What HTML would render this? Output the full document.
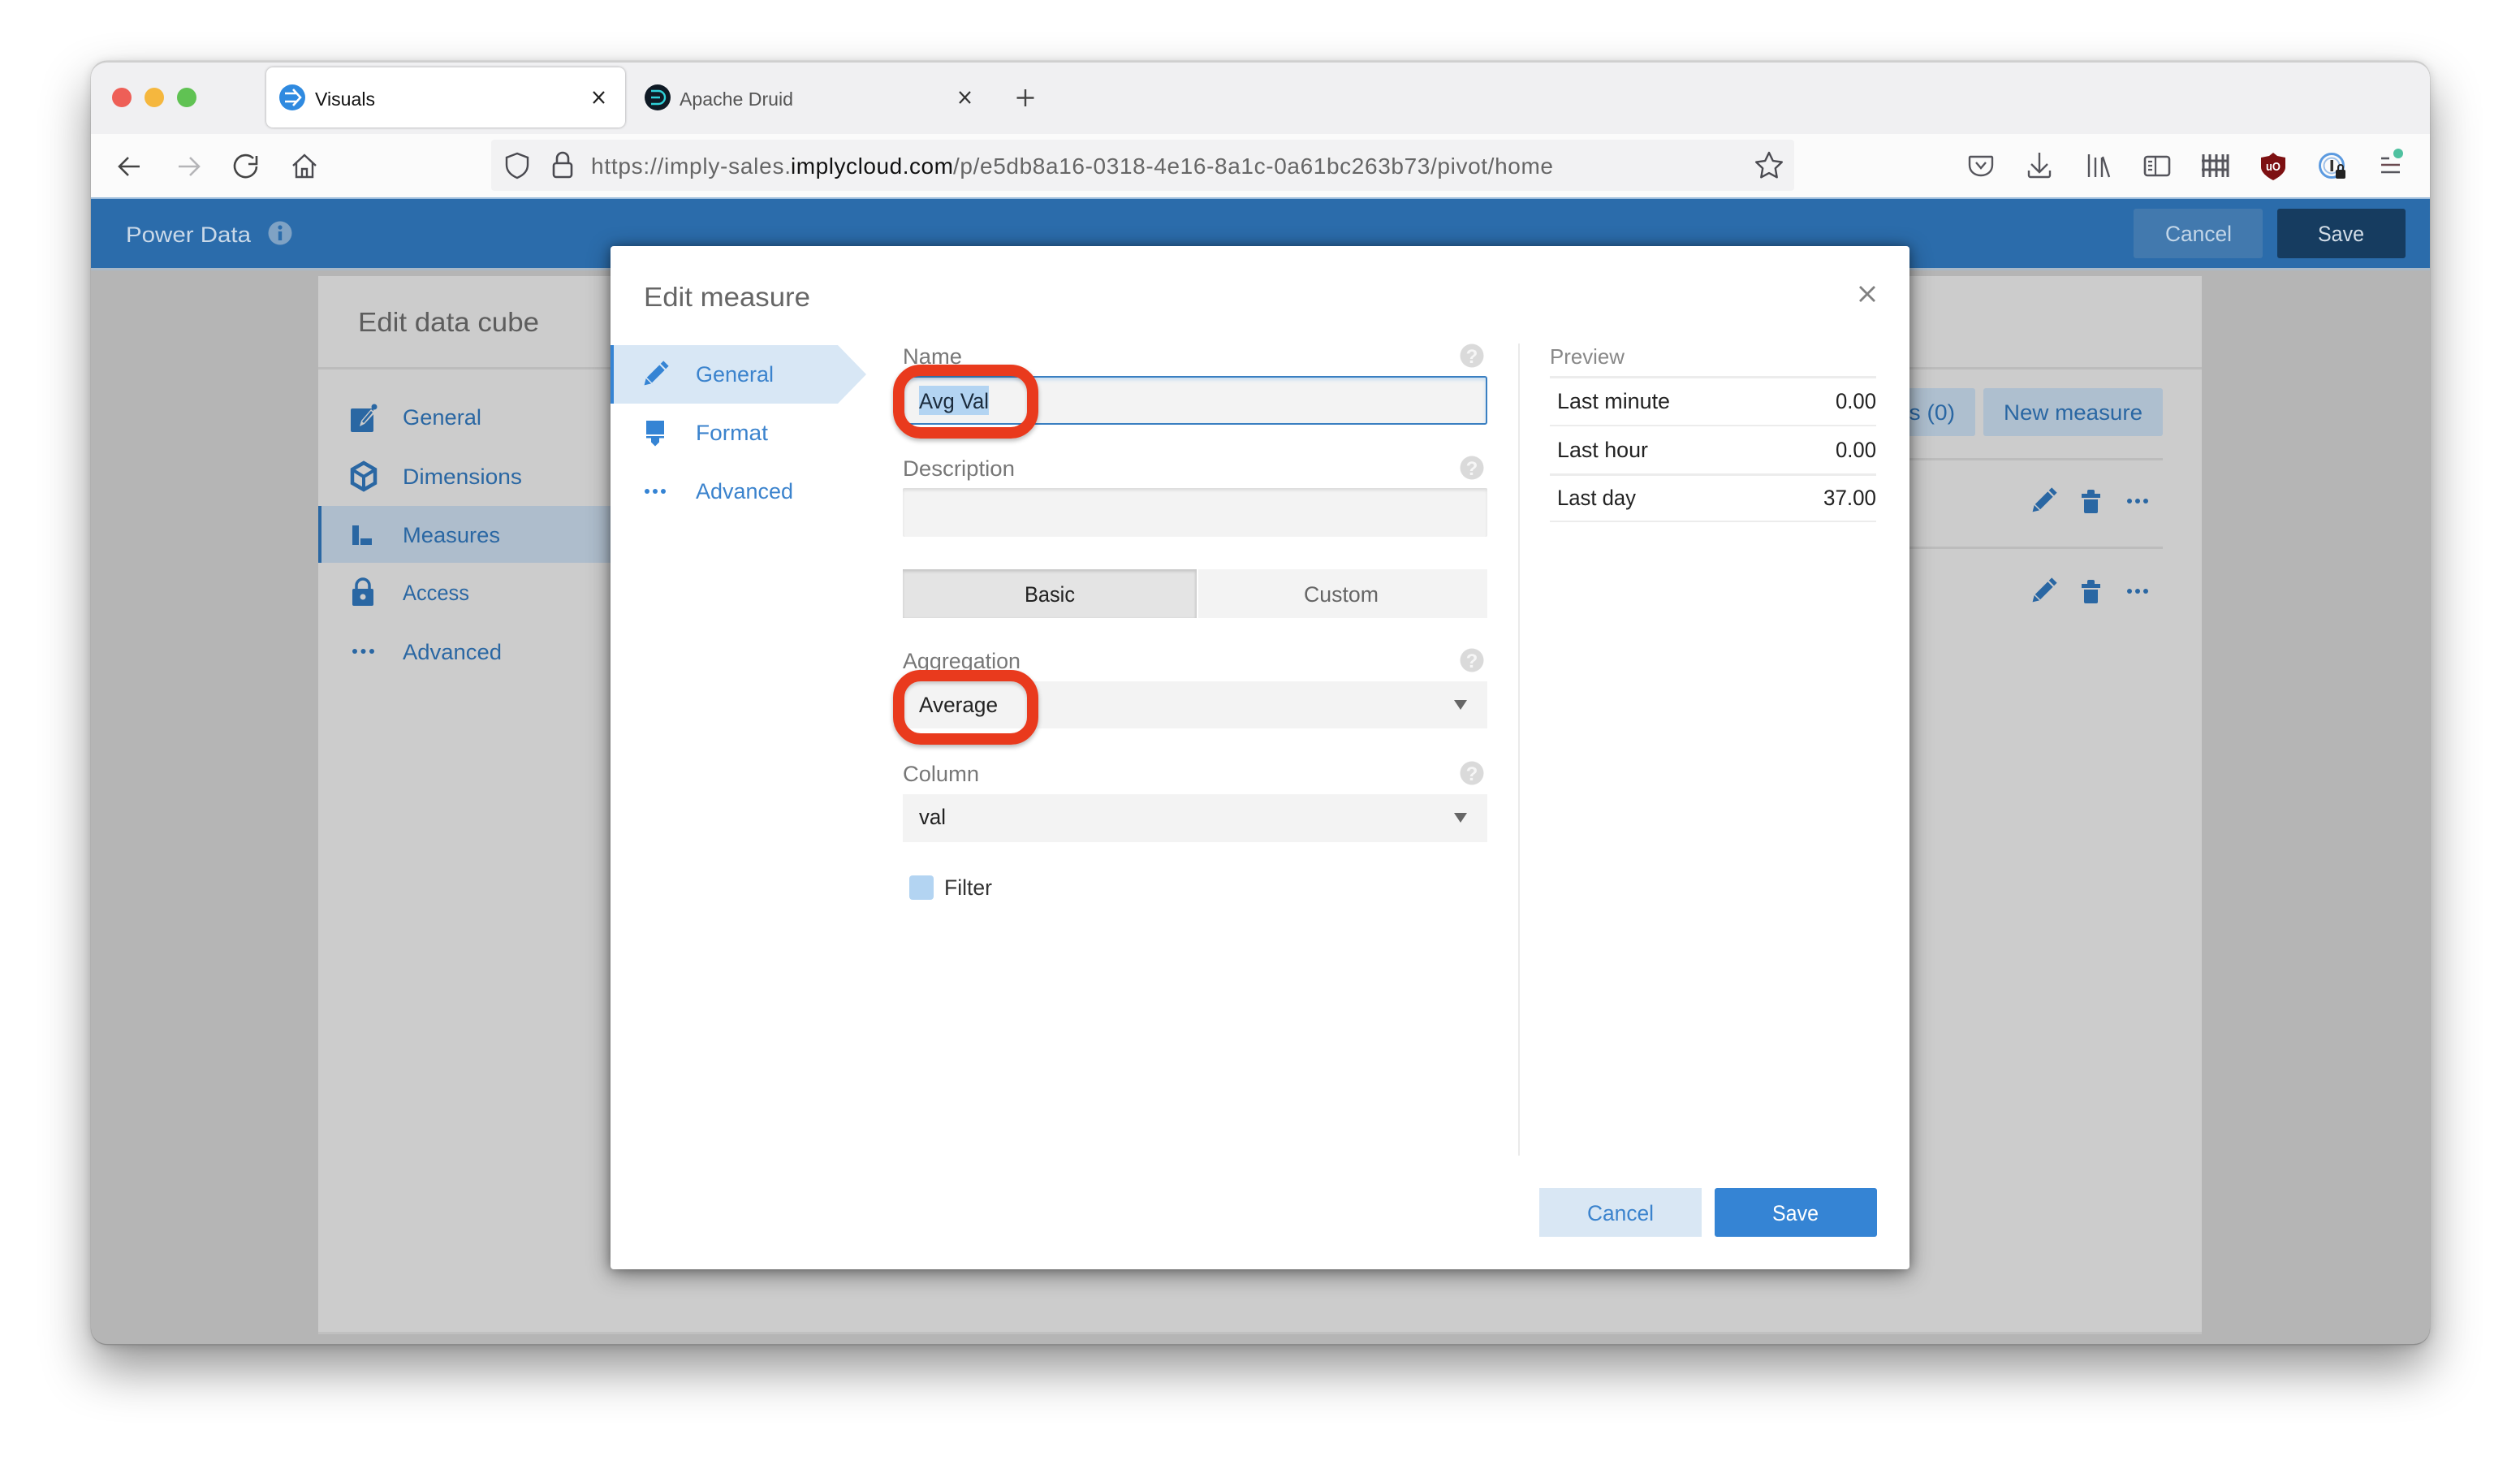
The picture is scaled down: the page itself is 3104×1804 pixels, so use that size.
<!DOCTYPE html>
<html lang="en">
<head>
<meta charset="utf-8">
<title>Edit measure</title>
<style>
html,body{margin:0;padding:0;background:#fff;width:3104px;height:1804px;overflow:hidden;font-family:"Liberation Sans",sans-serif}
div{position:absolute;box-sizing:border-box}
svg.l{position:absolute;left:0;top:0;width:3104px;height:1804px}
svg text{font-family:"Liberation Sans",sans-serif}
.red{border:14px solid #e93a1d;border-radius:34px;box-shadow:0 3px 6px rgba(0,0,0,.28),inset 0 3px 4px rgba(0,0,0,.18)}
</style>
</head>
<body>
<!-- window -->
<div style="left:112px;top:75px;width:2881px;height:1581px;background:#b5b5b5;border-radius:20px;box-shadow:0 30px 60px rgba(0,0,0,.42),0 2px 12px rgba(0,0,0,.15),0 0 1px rgba(0,0,0,.4);border-bottom:1px solid #8c8c8c"></div>
<div style="left:112px;top:75px;width:2881px;height:90px;background:#f0f0f2;border-radius:20px 20px 0 0;border-top:2px solid #cfcfcf"></div>
<div style="left:112px;top:165px;width:2881px;height:78px;background:#fbfbfb"></div>
<!-- tab -->
<div style="left:328px;top:83px;width:442px;height:74px;background:#fff;border-radius:8px;box-shadow:0 0 3px rgba(0,0,0,.35)"></div>
<!-- url bar -->
<div style="left:605px;top:172px;width:1605px;height:63px;background:#f2f2f3;border-radius:4px"></div>
<!-- app header -->
<div style="left:112px;top:243px;width:2881px;height:2px;background:#9cbcdc"></div>
<div style="left:112px;top:245px;width:2881px;height:85px;background:#2b6cab"></div>
<div style="left:112px;top:330px;width:2881px;height:3px;background:#a9b9c8"></div>
<div style="left:2628px;top:257px;width:159px;height:61px;background:#4279ae;border-radius:3px"></div>
<div style="left:2805px;top:257px;width:158px;height:61px;background:#163c60;border-radius:3px"></div>
<!-- panel -->
<div style="left:392px;top:340px;width:2320px;height:1303px;background:#ccc;border-bottom:3px solid #c0c0c0"></div>
<div style="left:392px;top:452px;width:2320px;height:3px;background:#bcbcbc"></div>
<div style="left:392px;top:623px;width:360px;height:70px;background:#aebdcc"></div>
<div style="left:392px;top:623px;width:4px;height:70px;background:#2a67a3"></div>
<div style="left:2200px;top:478px;width:233px;height:59px;background:#aebfcf;border-radius:3px"></div>
<div style="left:2443px;top:478px;width:221px;height:59px;background:#aebfcf;border-radius:3px"></div>
<div style="left:2200px;top:564px;width:464px;height:3px;background:#bcbcbc"></div>
<div style="left:2200px;top:673px;width:464px;height:3px;background:#bcbcbc"></div>

<svg class="l" viewBox="0 0 3104 1804" xmlns="http://www.w3.org/2000/svg">
  <!-- traffic lights -->
  <circle cx="150" cy="120" r="12" fill="#ee5f57"/>
  <circle cx="190" cy="120" r="12" fill="#f5b73e"/>
  <circle cx="230" cy="120" r="12" fill="#60c253"/>
  <!-- favicons -->
  <circle cx="360" cy="120" r="16" fill="#2f8ae0"/>
  <path d="M351 115h14M351 125h14M361 110l9 10-9 10" fill="none" stroke="#fff" stroke-width="2.6"/>
  <text x="388" y="130" font-size="23" fill="#111" textLength="74" lengthAdjust="spacingAndGlyphs">Visuals</text>
  <path d="M731 113l13 14M744 113l-13 14" stroke="#222" stroke-width="2.2"/>
  <circle cx="810" cy="120" r="16" fill="#0f1a25"/>
  <path d="M802 112h9a8 8 0 0 1 0 16h-9M802 120h11" fill="none" stroke="#2fd0d8" stroke-width="2.4"/>
  <text x="837" y="130" font-size="23" fill="#555" textLength="140" lengthAdjust="spacingAndGlyphs">Apache Druid</text>
  <path d="M1182 113l13 14M1195 113l-13 14" stroke="#333" stroke-width="2.2"/>
  <path d="M1263 110v21M1252.500 120.500h21" stroke="#444" stroke-width="2.4"/>
  <!-- nav buttons -->
  <path d="M172 205h-24M158 194l-11 11 11 11" fill="none" stroke="#444" stroke-width="2.6"/>
  <path d="M220 205h24M234 194l11 11-11 11" fill="none" stroke="#b5b5b8" stroke-width="2.6"/>
  <path d="M312 195a13.500 13.500 0 1 0 4 10M316 192v10h-10" fill="none" stroke="#444" stroke-width="2.6"/>
  <path d="M361 204l14-13 14 13M365 201v17h20v-17M372 218v-10h6v10" fill="none" stroke="#4a4a50" stroke-width="2.4"/>
  <!-- url bar icons -->
  <path d="M637 189l13 5v9c0 8-6 13-13 16-7-3-13-8-13-16v-9z" fill="none" stroke="#4a4a50" stroke-width="2.4"/>
  <rect x="682" y="201" width="22" height="17" rx="3" fill="none" stroke="#4a4a50" stroke-width="2.6"/>
  <path d="M686 201v-6a7 7 0 0 1 14 0v6" fill="none" stroke="#4a4a50" stroke-width="2.6"/>
  <text x="728" y="214" font-size="28" fill="#666" textLength="246" lengthAdjust="spacing">https://imply-sales.</text>
  <text x="974" y="214" font-size="28" fill="#111" textLength="200" lengthAdjust="spacing">implycloud.com</text>
  <text x="1174" y="214" font-size="28" fill="#666" textLength="739" lengthAdjust="spacing">/p/e5db8a16-0318-4e16-8a1c-0a61bc263b73/pivot/home</text>
  <path d="M2179 188l4.800 10 11 1.600-8 7.700 1.900 11-9.700-5.200-9.700 5.200 1.900-11-8-7.700 11-1.600z" fill="none" stroke="#4a4a50" stroke-width="2.4" stroke-linejoin="round"/>
  <!-- toolbar right icons -->
  <path d="M2427 193h26a1 1 0 0 1 1 1v9c0 8-6 13-14 13s-14-5-14-13v-9a1 1 0 0 1 1-1z" fill="none" stroke="#55555c" stroke-width="2.4"/>
  <path d="M2434 200l6 7 6-7" fill="none" stroke="#55555c" stroke-width="2.4"/>
  <path d="M2512 188v24M2502 202l10 10 10-10M2499 210v6a2 2 0 0 0 2 2h22a2 2 0 0 0 2-2v-6" fill="none" stroke="#55555c" stroke-width="2.4"/>
  <path d="M2573 190v28M2581 194v24M2589 194v24M2590 193l8 25" fill="none" stroke="#55555c" stroke-width="2.4"/>
  <rect x="2642" y="193" width="30" height="23" rx="3" fill="none" stroke="#55555c" stroke-width="2.6"/>
  <path d="M2655 193v23M2646 199h5M2646 204h5M2646 209h5" fill="none" stroke="#55555c" stroke-width="2.2"/>
  <path d="M2714 190v28M2722 190v28M2730 190v28M2738 190v28M2744 190v28M2712 198h33M2712 209h33" fill="none" stroke="#55555c" stroke-width="3"/>
  <path d="M2800 188l5 4 10 2v12c0 6-7 12-15 16-8-4-15-10-15-16v-12l10-2z" fill="#7d1012"/>
  <text x="2791" y="210" font-size="15" font-weight="bold" fill="#fff" textLength="18" lengthAdjust="spacingAndGlyphs">uO</text>
  <circle cx="2872" cy="204" r="14.500" fill="none" stroke="#5b9ae0" stroke-width="3"/>
  <circle cx="2872" cy="204" r="9.500" fill="none" stroke="#9ec0e8" stroke-width="2"/>
  <rect x="2870.500" y="197" width="3.500" height="14" fill="#333"/>
  <rect x="2877" y="209" width="12" height="11" rx="2" fill="#222"/>
  <path d="M2880 209v-3a3 3 0 0 1 6 0v3" fill="none" stroke="#222" stroke-width="2"/>
  <path d="M2933 195h10" stroke="#55555c" stroke-width="2.600"/>
  <path d="M2933 203h23" stroke="#6b4a50" stroke-width="2.600"/>
  <path d="M2933 212h23" stroke="#55555c" stroke-width="2.600"/>
  <circle cx="2954" cy="189" r="6" fill="#4fc1a0"/>

  <!-- header text -->
  <text x="155" y="298" font-size="27" fill="#cad9e8" textLength="154" lengthAdjust="spacingAndGlyphs">Power Data</text>
  <circle cx="345" cy="287" r="14.500" fill="#7fa2c4"/>
  <circle cx="345" cy="280" r="2.600" fill="#2b6cab"/>
  <rect x="342.800" y="285" width="4.400" height="11" fill="#2b6cab"/>
  <text x="2667" y="297" font-size="27" fill="#c3d6e8" textLength="82" lengthAdjust="spacingAndGlyphs">Cancel</text>
  <text x="2855" y="297" font-size="27" fill="#d4dee8" textLength="57" lengthAdjust="spacingAndGlyphs">Save</text>

  <!-- panel left -->
  <text x="441" y="408" font-size="33" fill="#5d5d5d" textLength="223" lengthAdjust="spacingAndGlyphs">Edit data cube</text>
  <g fill="#2a67a3" font-size="27">
    <text x="496" y="523" textLength="97" lengthAdjust="spacingAndGlyphs">General</text>
    <text x="496" y="596" textLength="147" lengthAdjust="spacingAndGlyphs">Dimensions</text>
    <text x="496" y="668" textLength="120" lengthAdjust="spacingAndGlyphs">Measures</text>
    <text x="496" y="739" textLength="82" lengthAdjust="spacingAndGlyphs">Access</text>
    <text x="496" y="812" textLength="122" lengthAdjust="spacingAndGlyphs">Advanced</text>
  </g>
  <!-- left icons -->
  <rect x="432" y="503" width="28" height="29" rx="2" fill="#2a67a3"/>
  <path d="M443 525l2-7 12-14 5 4-13 14z" fill="#ccc"/>
  <path d="M446 519l11-13 2 2-11 13z" fill="#2a67a3"/>
  <circle cx="461" cy="501" r="3.500" fill="#2a67a3"/>
  <path d="M448 570l14 8v17l-14 8-14-8v-17z" fill="none" stroke="#2a67a3" stroke-width="4.500"/>
  <path d="M435 579l13 8 13-8M448 587v15" fill="none" stroke="#2a67a3" stroke-width="4"/>
  <rect x="434" y="647" width="8" height="24" fill="#2a67a3"/>
  <rect x="444" y="663" width="14" height="8" fill="#2a67a3"/>
  <rect x="434" y="725" width="26" height="21" rx="2" fill="#2a67a3"/>
  <path d="M439 725v-4a8 8 0 0 1 16 0v4" fill="none" stroke="#2a67a3" stroke-width="3.500"/>
  <circle cx="447" cy="735" r="3.500" fill="#ccc"/>
  <g fill="#2a67a3"><circle cx="437" cy="802" r="3"/><circle cx="447.500" cy="802" r="3"/><circle cx="458" cy="802" r="3"/></g>

  <!-- panel right behind modal -->
  <text x="2210" y="517" font-size="27" fill="#2a67a3" textLength="198" lengthAdjust="spacingAndGlyphs">Suggestions (0)</text>
  <text x="2468" y="517" font-size="27" fill="#2a67a3" textLength="171" lengthAdjust="spacingAndGlyphs">New measure</text>
  <g id="rowicons" fill="#2a67a3">
    <g transform="translate(2517 617) rotate(45)"><rect x="-4.500" y="-19" width="9" height="5"/><rect x="-4.500" y="-12" width="9" height="22"/><path d="M-4.500 11.500h9L0 19z"/></g>
    <path d="M2571 608v-3a2 2 0 0 1 2-2h5a2 2 0 0 1 2 2v3h7v5h-23v-5z"/>
    <path d="M2567 615h17v15a2 2 0 0 1-2 2h-13a2 2 0 0 1-2-2z"/>
    <circle cx="2623" cy="617" r="3"/><circle cx="2633" cy="617" r="3"/><circle cx="2643" cy="617" r="3"/>
    <g transform="translate(2517 728) rotate(45)"><rect x="-4.500" y="-19" width="9" height="5"/><rect x="-4.500" y="-12" width="9" height="22"/><path d="M-4.500 11.500h9L0 19z"/></g>
    <path d="M2571 719v-3a2 2 0 0 1 2-2h5a2 2 0 0 1 2 2v3h7v5h-23v-5z"/>
    <path d="M2567 726h17v15a2 2 0 0 1-2 2h-13a2 2 0 0 1-2-2z"/>
    <circle cx="2623" cy="728" r="3"/><circle cx="2633" cy="728" r="3"/><circle cx="2643" cy="728" r="3"/>
  </g>
</svg>

<!-- modal -->
<div style="left:752px;top:303px;width:1600px;height:1260px;background:#fff;border-radius:4px;box-shadow:0 6px 28px rgba(0,0,0,.45),0 0 12px rgba(0,0,0,.3)"></div>
<div style="left:752px;top:425px;width:4px;height:72px;background:#3584d4"></div>
<!-- form fields -->
<div style="left:1112px;top:463px;width:720px;height:60px;background:#f3f3f3;border:2px solid #3a7fc1;border-radius:3px;box-shadow:inset 0 3px 4px #c9dff2"></div>
<div style="left:1132px;top:475px;width:86px;height:36px;background:#b3d4f2"></div>
<div style="left:1112px;top:601px;width:720px;height:60px;background:#f3f3f3;box-shadow:inset 0 3px 3px #ddd;border-radius:2px"></div>
<div style="left:1112px;top:701px;width:362px;height:60px;background:#e4e4e4;box-shadow:inset 0 3px 3px #c8c8c8,inset -2px 0 2px #cfcfcf"></div>
<div style="left:1476px;top:701px;width:356px;height:60px;background:#f3f3f3"></div>
<div style="left:1112px;top:839px;width:720px;height:58px;background:#f3f3f3"></div>
<div style="left:1112px;top:978px;width:720px;height:59px;background:#f3f3f3"></div>
<div style="left:1120px;top:1078px;width:30px;height:30px;background:#b3d4f2;border-radius:4px"></div>
<div style="left:1870px;top:423px;width:2px;height:1000px;background:#eaeaea"></div>
<!-- preview table lines -->
<div style="left:1909px;top:463px;width:402px;height:3px;background:#ececec"></div>
<div style="left:1909px;top:523px;width:402px;height:2px;background:#ececec"></div>
<div style="left:1909px;top:583px;width:402px;height:3px;background:#ececec"></div>
<div style="left:1909px;top:641px;width:402px;height:2px;background:#ececec"></div>
<!-- buttons -->
<div style="left:1896px;top:1463px;width:200px;height:60px;background:#d9e7f4"></div>
<div style="left:2112px;top:1463px;width:200px;height:60px;background:#3584d4;border-radius:3px"></div>

<svg class="l" viewBox="0 0 3104 1804" xmlns="http://www.w3.org/2000/svg">
  <text x="793" y="377" font-size="33" fill="#666" textLength="205" lengthAdjust="spacingAndGlyphs">Edit measure</text>
  <path d="M2291 353l18 18M2309 353l-18 18" stroke="#808080" stroke-width="2.800"/>
  <!-- modal nav -->
  <path d="M756 425h276l35 36-35 36h-276z" fill="#d8e7f5"/>
  <g fill="#3b83cd" font-size="27">
    <text x="857" y="470" textLength="96" lengthAdjust="spacingAndGlyphs">General</text>
    <text x="857" y="542" textLength="89" lengthAdjust="spacingAndGlyphs">Format</text>
    <text x="857" y="614" textLength="120" lengthAdjust="spacingAndGlyphs">Advanced</text>
  </g>
  <g fill="#3584d4">
    <g transform="translate(807 461) rotate(45)"><rect x="-4.500" y="-19" width="9" height="5"/><rect x="-4.500" y="-12" width="9" height="22"/><path d="M-4.500 11.500h9L0 19z"/></g>
    <rect x="796" y="518" width="22" height="17"/>
    <rect x="796" y="537" width="22" height="2.500"/>
    <path d="M802 539.500h10v5l-5 5-5-5z"/>
    <circle cx="797" cy="605" r="3"/><circle cx="807" cy="605" r="3"/><circle cx="817" cy="605" r="3"/>
  </g>
  <!-- labels -->
  <g fill="#777" font-size="27">
    <text x="1112" y="448" textLength="73" lengthAdjust="spacingAndGlyphs">Name</text>
    <text x="1112" y="586" textLength="138" lengthAdjust="spacingAndGlyphs">Description</text>
    <text x="1112" y="823" textLength="145" lengthAdjust="spacingAndGlyphs">Aggregation</text>
    <text x="1112" y="962" textLength="94" lengthAdjust="spacingAndGlyphs">Column</text>
  </g>
  <g font-size="24" font-weight="bold" text-anchor="middle">
    <circle cx="1813" cy="438" r="14.500" fill="#dadada"/><text x="1813" y="447" fill="#f6f6f6">?</text>
    <circle cx="1813" cy="576" r="14.500" fill="#dadada"/><text x="1813" y="585" fill="#f6f6f6">?</text>
    <circle cx="1813" cy="813" r="14.500" fill="#dadada"/><text x="1813" y="822" fill="#f6f6f6">?</text>
    <circle cx="1813" cy="952" r="14.500" fill="#dadada"/><text x="1813" y="961" fill="#f6f6f6">?</text>
  </g>
  <text x="1132" y="503" font-size="27" fill="#1b2b3c" textLength="86" lengthAdjust="spacingAndGlyphs">Avg Val</text>
  <text x="1262" y="741" font-size="27" fill="#222" textLength="62" lengthAdjust="spacingAndGlyphs">Basic</text>
  <text x="1606" y="741" font-size="27" fill="#666" textLength="92" lengthAdjust="spacingAndGlyphs">Custom</text>
  <text x="1132" y="877" font-size="27" fill="#222" textLength="97" lengthAdjust="spacingAndGlyphs">Average</text>
  <text x="1132" y="1015" font-size="27" fill="#222" textLength="33" lengthAdjust="spacingAndGlyphs">val</text>
  <text x="1163" y="1102" font-size="27" fill="#333" textLength="59" lengthAdjust="spacingAndGlyphs">Filter</text>
  <path d="M1791 862h16l-8 12z" fill="#666"/>
  <path d="M1791 1001h16l-8 12z" fill="#666"/>
  <!-- preview -->
  <text x="1909" y="448" font-size="26" fill="#888" textLength="92" lengthAdjust="spacingAndGlyphs">Preview</text>
  <g font-size="27" fill="#222">
    <text x="1918" y="503" textLength="139" lengthAdjust="spacingAndGlyphs">Last minute</text>
    <text x="2261" y="503" textLength="50" lengthAdjust="spacingAndGlyphs">0.00</text>
    <text x="1918" y="563" textLength="112" lengthAdjust="spacingAndGlyphs">Last hour</text>
    <text x="2261" y="563" textLength="50" lengthAdjust="spacingAndGlyphs">0.00</text>
    <text x="1918" y="622" textLength="97" lengthAdjust="spacingAndGlyphs">Last day</text>
    <text x="2246" y="622" textLength="65" lengthAdjust="spacingAndGlyphs">37.00</text>
  </g>
  <text x="1955" y="1503" font-size="27" fill="#3b83cd" textLength="82" lengthAdjust="spacingAndGlyphs">Cancel</text>
  <text x="2183" y="1503" font-size="27" fill="#fff" textLength="57" lengthAdjust="spacingAndGlyphs">Save</text>
</svg>

<!-- red annotation highlights -->
<div class="red" style="left:1100px;top:449px;width:179px;height:91px"></div>
<div class="red" style="left:1100px;top:825px;width:179px;height:92px"></div>
</body>
</html>
